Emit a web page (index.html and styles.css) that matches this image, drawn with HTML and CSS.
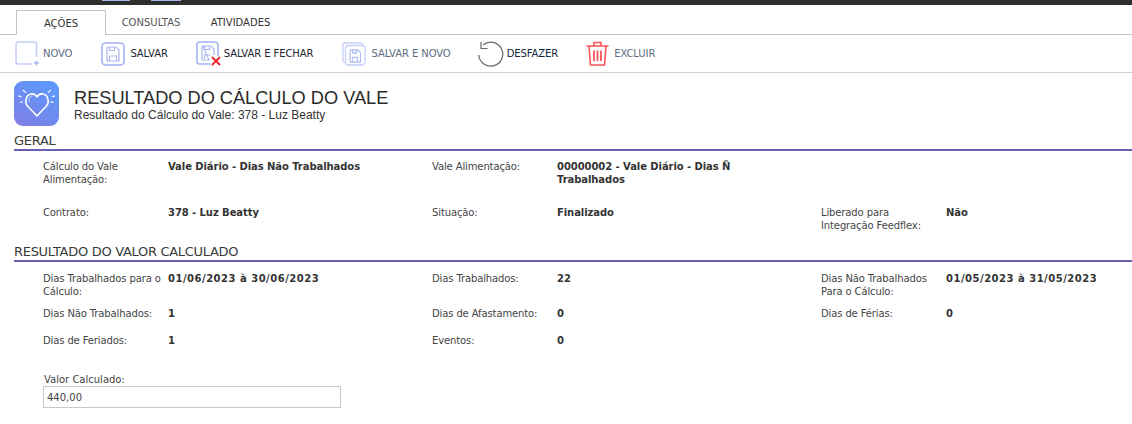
FILE: index.html
```html
<!DOCTYPE html>
<html lang="pt-BR">
<head>
<meta charset="utf-8">
<title>Resultado do Cálculo do Vale</title>
<link rel="stylesheet" href="styles.css">
</head>
<body>
<div class="topbar"><span class="topbit topbit-a"></span><span class="topbit topbit-b"></span></div>
<nav class="tabs">
  <span class="tab active">AÇÕES</span>
  <span class="tab tab-2">CONSULTAS</span>
  <span class="tab tab-3">ATIVIDADES</span>
</nav>
<div class="toolbar">
  <span class="tool t-novo">
    <svg width="25" height="25" viewBox="0 0 25 25" fill="none" stroke="#c3cdf5" stroke-width="1.5"><path d="M21.500 16V3a2 2 0 0 0-2-2H3a2 2 0 0 0-2 2v18a2 2 0 0 0 2 2h14"/><path d="M21.500 19.500v5M19 22h5" stroke="#a9b6ee"/></svg>
    <span class="muted">NOVO</span>
  </span>
  <span class="tool t-salvar">
    <svg width="24" height="24" viewBox="0 0 24 24" fill="none" stroke="#a3b3f6" stroke-width="1.600"><rect x="1" y="1" width="22" height="22" rx="3.500"/><g stroke="#aab8f0" stroke-width="1.200"><path d="M7 5h8l3 3v11H6V6a1 1 0 0 1 1-1z"/><path d="M8.500 5v3.500h5V5M8.500 19v-5h7v5"/></g></svg>
    <span>SALVAR</span>
  </span>
  <span class="tool t-fechar">
    <svg width="25" height="25" viewBox="0 0 25 25" fill="none" stroke="#a3b3f6" stroke-width="1.600"><path d="M15 23H3.500A2.500 2.500 0 0 1 1 20.500v-17A2.500 2.500 0 0 1 3.500 1h16A2.500 2.500 0 0 1 22 3.500V15"/><g stroke="#aab8f0" stroke-width="1.200"><path d="M7 5h8l3 3v6M13 19H6V6a1 1 0 0 1 1-1z"/><path d="M8.500 5v3.500h5V5M8.500 18v-4h6"/></g><path d="M16 16l8 8M24 16l-8 8" stroke="#f0202a" stroke-width="1.800"/></svg>
    <span>SALVAR E FECHAR</span>
  </span>
  <span class="tool t-novo2">
    <svg width="24" height="24" viewBox="0 0 24 24" fill="none" stroke="#c6d0f8" stroke-width="1.300"><rect x="3.500" y="3.500" width="19.500" height="19.500" rx="3"/><path d="M3 20.500a2 2 0 0 1-2-2V3a2 2 0 0 1 2-2h15.500a2 2 0 0 1 2 2"/><path d="M9 8h7l2.500 2.500V20H8V9a1 1 0 0 1 1-1z" stroke="#b4c0f4"/><path d="M10.500 8v3h4V8M10.500 20v-4.500h5V20" stroke="#b4c0f4"/></svg>
    <span class="muted">SALVAR E NOVO</span>
  </span>
  <span class="tool t-desfazer">
    <svg width="26" height="26" viewBox="0 0 26 26" fill="none" stroke="#6b6b6b" stroke-width="1.300"><path d="M5 4A12 12 0 1 1 0.800 14"/><path d="M3 1v6.500h6.500" stroke-width="1.200"/></svg>
    <span class="dark">DESFAZER</span>
  </span>
  <span class="tool t-excluir">
    <svg width="23" height="25" viewBox="0 0 23 25" fill="none" stroke="#f8545a" stroke-width="1.600"><path d="M0.500 5h22M8 5V1.500h7V5"/><path d="M3 5l1.500 19h14L20 5"/><path d="M8 9.500v10.500M11.500 9.500v10.500M15 9.500v10.500" stroke-width="1.800"/></svg>
    <span class="muted">EXCLUIR</span>
  </span>
</div>
<header class="head">
  <svg class="logo" width="45" height="45" viewBox="0 0 45 45">
    <defs><linearGradient id="lg" x1="0.700" y1="0.100" x2="0.200" y2="1"><stop offset="0" stop-color="#5f97fb"/><stop offset="1" stop-color="#7d7fe6"/></linearGradient></defs>
    <rect width="45" height="45" rx="9" fill="url(#lg)"/>
    <path d="M23 35L13.500 25C10.500 21.500 11.500 14 17 13C20 12.500 22 14 23 16C24 14 26 12.500 29 13C34.500 14 35.500 21.500 32.500 25Z" fill="none" stroke="#fff" stroke-width="1.600" stroke-linejoin="round"/>
    <path d="M15.500 21c-1.500-3 0-5.500 3-6" fill="none" stroke="#e8edff" stroke-width="0.800"/>
    <path d="M8.700 9L12 11.700M4.300 15L7.700 15.700M6 21.700L8.700 20.700M37 9L34 11.700M41 15L37.700 15.700M39.500 21.500L36.500 20.700" stroke="#e6ebff" stroke-width="1.300" fill="none"/>
  </svg>
  <div class="head-text">
    <h1>RESULTADO DO CÁLCULO DO VALE</h1>
    <p>Resultado do Cálculo do Vale: 378 - Luz Beatty</p>
  </div>
</header>
<h2 class="section">GERAL</h2>
<div class="grid g1">
  <div class="label">Cálculo do Vale Alimentação:</div><div class="value">Vale Diário - Dias Não Trabalhados</div>
  <div class="label">Vale Alimentação:</div><div class="value narrow">00000002 - Vale Diário - Dias Ñ Trabalhados</div>
  <div></div><div></div>
</div>
<div class="grid g2">
  <div class="label">Contrato:</div><div class="value">378 - Luz Beatty</div>
  <div class="label">Situação:</div><div class="value">Finalizado</div>
  <div class="label tight">Liberado para Integração Feedflex:</div><div class="value">Não</div>
</div>
<h2 class="section">RESULTADO DO VALOR CALCULADO</h2>
<div class="grid g3">
  <div class="label">Dias Trabalhados para o Cálculo:</div><div class="value date">01/06/2023 à 30/06/2023</div>
  <div class="label">Dias Trabalhados:</div><div class="value">22</div>
  <div class="label">Dias Não Trabalhados Para o Cálculo:</div><div class="value date">01/05/2023 à 31/05/2023</div>
</div>
<div class="grid g4">
  <div class="label">Dias Não Trabalhados:</div><div class="value">1</div>
  <div class="label">Dias de Afastamento:</div><div class="value">0</div>
  <div class="label">Dias de Férias:</div><div class="value">0</div>
</div>
<div class="grid g5">
  <div class="label">Dias de Feriados:</div><div class="value">1</div>
  <div class="label">Eventos:</div><div class="value">0</div>
  <div></div><div></div>
</div>
<div class="field">
  <label class="field-label" for="valor">Valor Calculado:</label>
  <input class="field-input" id="valor" type="text" value="440,00">
</div>
</body>
</html>
```
FILE: styles.css
```css
* { box-sizing: border-box; }
html, body { margin: 0; padding: 0; background: #fff; }
body { width: 1132px; height: 424px; overflow: hidden; font-family: "DejaVu Sans", Verdana, sans-serif; font-size: 10px; color: #333; }

.topbar { height: 5px; background: #2e2e2e; display: flex; }
.topbit { height: 1px; background: #a9b6ee; }
.topbit-a { width: 28px; margin-left: 102px; }
.topbit-b { width: 30px; margin-left: 21px; }

.tabs { height: 30px; border-bottom: 1px solid #c4c4c4; padding: 5px 0 0 16px; display: flex; }
.tab { display: flex; align-items: center; justify-content: center; height: 24px; font-size: 10px; color: #444; }
.tab.active { width: 90px; height: 25px; border: 1px solid #c4c4c4; border-bottom: 0; background: #fff; color: #333; }
.tab-2 { margin-left: 16px; width: 58px; color: #555; }
.tab-3 { margin-left: 30px; width: 61px; color: #333; }

.toolbar { height: 38px; border-bottom: 1px solid #d0d0d0; display: flex; align-items: center; font-size: 10px; color: #223; letter-spacing: -0.08px; }
.tool { display: flex; align-items: center; gap: 5px; }
.muted { color: #5b6b80; }
.dark { color: #12263f; }
.t-novo { margin-left: 15px; gap: 3px; }
.t-salvar { margin-left: 29px; }
.t-fechar { margin-left: 28px; gap: 3px; }
.t-novo2 { margin-left: 29px; }
.t-desfazer { margin-left: 27px; gap: 3px; }
.t-excluir { margin-left: 28px; }

.head { display: flex; gap: 15px; padding: 8px 0 0 14px; height: 59px; }
.logo { flex: none; }
.head-text { padding-top: 6px; font-family: "Liberation Sans", Arial, sans-serif; }
.head-text h1 { margin: 0; font-size: 18.2px; line-height: 22px; font-weight: 400; color: #2a2a2a; }
.head-text p { margin: -1px 0 0; font-size: 12px; line-height: 14px; color: #333; }

.section { margin: 0 0 0 14px; padding-top: 1px; font-size: 13px; line-height: 16px; height: 19px; font-weight: 400; color: #3a3a3a; border-bottom: 2px solid #6560b0; letter-spacing: -0.3px; }

.grid { display: grid; grid-template-columns: 125px 264px 125px 264px 125px 200px; padding-left: 43px; line-height: 13px; }
.label { color: #444; letter-spacing: -0.12px; }
.tight { padding-right: 10px; }
.value { font-weight: 700; color: #333; letter-spacing: -0.07px; }
.date { letter-spacing: 0.5px; }
.narrow { width: 190px; }
.g1 { padding-top: 9px; height: 55px; }
.g2 { height: 37px; }
.g3 { padding-top: 10px; height: 45px; }
.g4 { height: 27px; }
.g5 { height: 39px; }

.field { margin: 0 0 0 44px; }
.field-label { display: block; line-height: 13px; color: #444; }
.field-input { display: block; margin-left: -1px; width: 298px; height: 22px; border: 1px solid #c8c8c8; padding: 0 3px; font: inherit; color: #444; outline: 0; border-radius: 0; }
```
